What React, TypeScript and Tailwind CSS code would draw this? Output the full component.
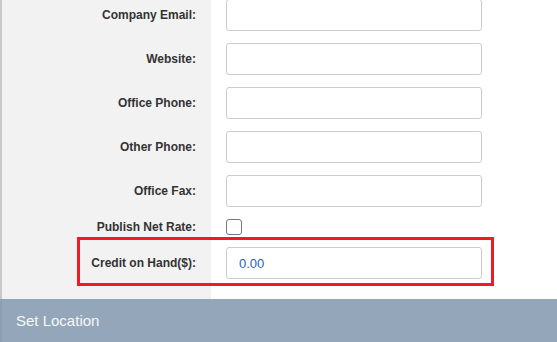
import React from "react";

const textRows = ["Company Email", "Website", "Office Phone", "Other Phone", "Office Fax"];

const Label = ({ children }: { children: React.ReactNode }) => (
  <div className="w-[209px] shrink-0 bg-[#f2f2f2] pr-[15px] text-right text-[12px] font-bold text-[#333333] self-stretch flex items-center justify-end">
    {children}
  </div>
);

const App = () => {
  return (
    <div className="w-[557px] h-[342px] overflow-hidden bg-white font-['Liberation_Sans',Arial,sans-serif]">
      <div className="relative -mt-[7px] border-l-2 border-[#c9c9c9]">
        {textRows.map((name) => (
          <div key={name} className="flex h-[44px] items-center">
            <Label>{name}:</Label>
            <div className="pl-[15px]">
              <input
                type="text"
                className="h-[32px] w-[256px] rounded-[3px] border border-[#cccccc] bg-white px-3 outline-none"
              />
            </div>
          </div>
        ))}

        <div className="flex h-[28px] items-center">
          <Label>Publish Net Rate:</Label>
          <div className="pl-[15px] flex items-center">
            <div className="h-[16px] w-[16px] rounded-[3px] border border-[#767676] bg-white" />
          </div>
        </div>

        <div className="flex h-[44px] items-center">
          <Label>Credit on Hand($):</Label>
          <div className="pl-[15px]">
            <input
              type="text"
              defaultValue="0.00"
              className="h-[32px] w-[256px] rounded-[3px] border border-[#cccccc] bg-white px-3 text-[13px] text-[#1d5fbf] outline-none"
            />
          </div>
        </div>

        <div className="flex h-[14px]">
          <div className="w-[209px] bg-[#f2f2f2]" />
        </div>

        {/* highlight */}
        <div className="absolute left-[75px] top-[244px] h-[49px] w-[417px] border-[3px] border-[#ed1c24]" />
      </div>

      <div className="flex h-[44px] items-center border-l-2 border-[#8d9eb2] bg-[#94a6ba] pl-[14px] text-[15px] text-[#f7f7f7]">
        Set Location
      </div>
    </div>
  );
};

export default App;
